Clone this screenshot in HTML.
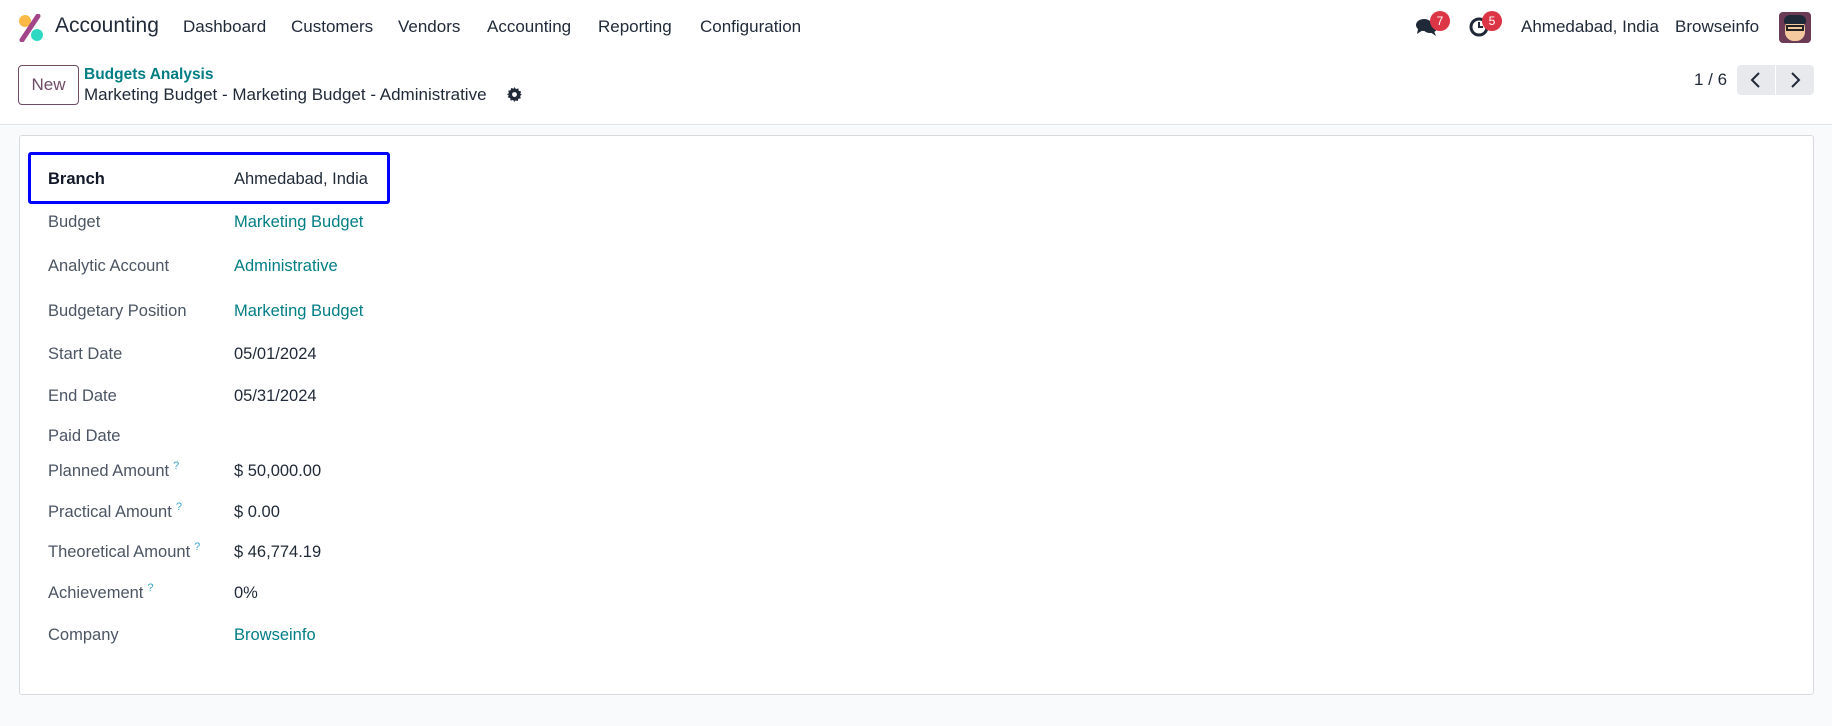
<!DOCTYPE html>
<html><head><meta charset="utf-8"><style>
*{box-sizing:border-box;margin:0;padding:0}
body{width:1832px;height:726px;background:#f9fafb;font-family:"Liberation Sans",sans-serif;color:#374151;position:relative;overflow:hidden}
.a{position:absolute;white-space:nowrap}
.top{position:absolute;left:0;top:0;width:1832px;height:125px;background:#fff;border-bottom:1px solid #dee2e6}
.nav{font-size:17px;color:#1f2937;top:17px}
.card{position:absolute;left:19px;top:135px;width:1795px;height:560px;background:#fff;border:1px solid #d8dadd;border-radius:3px}
.l{position:absolute;left:48px;font-size:16.5px;line-height:20px;color:#4b5563;transform:translateY(-50%)}
.v{position:absolute;left:234px;font-size:16.5px;line-height:20px;color:#1f2937;transform:translateY(-50%)}
.lk{color:#017e84}
.q{position:relative;top:-7px;color:#3aa6c8;font-size:11px;line-height:0;margin-left:4px}
.badge{position:absolute;width:20px;height:20px;border-radius:10px;background:#dc3545;color:#fff;font-size:12px;text-align:center;line-height:20px}
</style></head><body>
<div class="top"></div>
<svg class="a" style="left:18px;top:14px" width="26" height="28" viewBox="0 0 26 28"><circle cx="7" cy="7" r="6" fill="#fbb945"/><circle cx="19" cy="21" r="6" fill="#2ed8c3"/><path d="M4 26 L20 2" stroke="#a24689" stroke-width="5" stroke-linecap="round"/></svg>
<div class="a" style="left:55px;top:14px;font-size:21px;color:#1f2937">Accounting</div>
<div class="a nav" style="left:183px">Dashboard</div>
<div class="a nav" style="left:291px">Customers</div>
<div class="a nav" style="left:398px">Vendors</div>
<div class="a nav" style="left:487px">Accounting</div>
<div class="a nav" style="left:598px">Reporting</div>
<div class="a nav" style="left:700px">Configuration</div>
<svg class="a" style="left:1415px;top:17px" width="24" height="20" viewBox="0 0 24 20"><ellipse cx="9" cy="8" rx="8" ry="6" fill="#1f2937"/><path d="M3 12 L2 17 L8 13Z" fill="#1f2937"/><ellipse cx="15" cy="11" rx="7" ry="5" fill="#1f2937"/><path d="M19 14 L21 19 L15 15Z" fill="#1f2937"/></svg>
<div class="badge" style="left:1430px;top:11px">7</div>
<svg class="a" style="left:1469px;top:17px" width="20" height="20" viewBox="0 0 20 20"><circle cx="10" cy="10" r="8" fill="none" stroke="#1f2937" stroke-width="3"/><path d="M10 5v5h4" stroke="#1f2937" stroke-width="2" fill="none"/></svg>
<div class="badge" style="left:1482px;top:11px">5</div>
<div class="a nav" style="left:1521px">Ahmedabad, India</div>
<div class="a nav" style="left:1675px">Browseinfo</div>
<div class="a" style="left:1779px;top:12px;width:32px;height:31px;border-radius:4px;background:#6b3a55;overflow:hidden"><div style="position:absolute;left:6px;top:7px;width:20px;height:22px;border-radius:9px;background:#f5c9a0"></div><div style="position:absolute;left:5px;top:3px;width:22px;height:9px;border-radius:6px 6px 2px 2px;background:#1f2937"></div><div style="position:absolute;left:7px;top:13px;width:18px;height:6px;border:2px solid #222"></div></div>
<div class="a" style="left:18px;top:65px;width:61px;height:40px;border:1px solid #714b67;border-radius:4px;color:#714b67;font-size:17px;text-align:center;line-height:38px">New</div>
<div class="a" style="left:84px;top:66px;font-size:15.5px;color:#017e84;font-weight:bold">Budgets Analysis</div>
<div class="a" style="left:84px;top:85px;font-size:17px;color:#1f2937">Marketing Budget - Marketing Budget - Administrative</div>
<svg class="a" style="left:507px;top:87px" width="15" height="15" viewBox="0 0 16 16"><path d="M8 0l1.5 2.2 2.6-.7.4 2.6 2.6.7-.9 2.5L16 8l-2 1.5.7 2.6-2.6.4-.7 2.6-2.5-.9L8 16l-1.5-2.2-2.6.7-.4-2.6-2.6-.7.9-2.5L0 8l2-1.5-.7-2.6 2.6-.4.7-2.6 2.5.9Z" fill="#1f2937"/><circle cx="8" cy="8" r="2.6" fill="#fff"/></svg>
<div class="a" style="left:1694px;top:70px;font-size:17px;color:#1f2937">1 / 6</div>
<div class="a" style="left:1737px;top:65px;width:77px;height:30px;background:#e7e9ed;border-radius:4px"></div>
<div class="a" style="left:1775px;top:65px;width:1px;height:30px;background:#fff"></div>
<svg class="a" style="left:1749px;top:71px" width="14" height="18" viewBox="0 0 14 18"><path d="M10 2L3 9l7 7" stroke="#1f2937" stroke-width="2" fill="none"/></svg>
<svg class="a" style="left:1788px;top:71px" width="14" height="18" viewBox="0 0 14 18"><path d="M4 2l7 7-7 7" stroke="#1f2937" stroke-width="2" fill="none"/></svg>
<div class="card"></div>
<div class="a" style="left:28px;top:152px;width:362px;height:52px;border:3px solid #0000ff;border-radius:3px"></div>
<div class="l" style="top:179px;color:#111827;font-weight:bold">Branch</div><div class="v" style="top:179px">Ahmedabad, India</div>
<div class="l" style="top:222px">Budget</div><div class="v lk" style="top:222px">Marketing Budget</div>
<div class="l" style="top:266px">Analytic Account</div><div class="v lk" style="top:266px">Administrative</div>
<div class="l" style="top:311px">Budgetary Position</div><div class="v lk" style="top:311px">Marketing Budget</div>
<div class="l" style="top:354px">Start Date</div><div class="v" style="top:354px">05/01/2024</div>
<div class="l" style="top:396px">End Date</div><div class="v" style="top:396px">05/31/2024</div>
<div class="l" style="top:436px">Paid Date</div>
<div class="l" style="top:471px">Planned Amount<span class="q">?</span></div><div class="v" style="top:471px">$ 50,000.00</div>
<div class="l" style="top:512px">Practical Amount<span class="q">?</span></div><div class="v" style="top:512px">$ 0.00</div>
<div class="l" style="top:552px">Theoretical Amount<span class="q">?</span></div><div class="v" style="top:552px">$ 46,774.19</div>
<div class="l" style="top:593px">Achievement<span class="q">?</span></div><div class="v" style="top:593px">0%</div>
<div class="l" style="top:635px">Company</div><div class="v lk" style="top:635px">Browseinfo</div>
</body></html>
